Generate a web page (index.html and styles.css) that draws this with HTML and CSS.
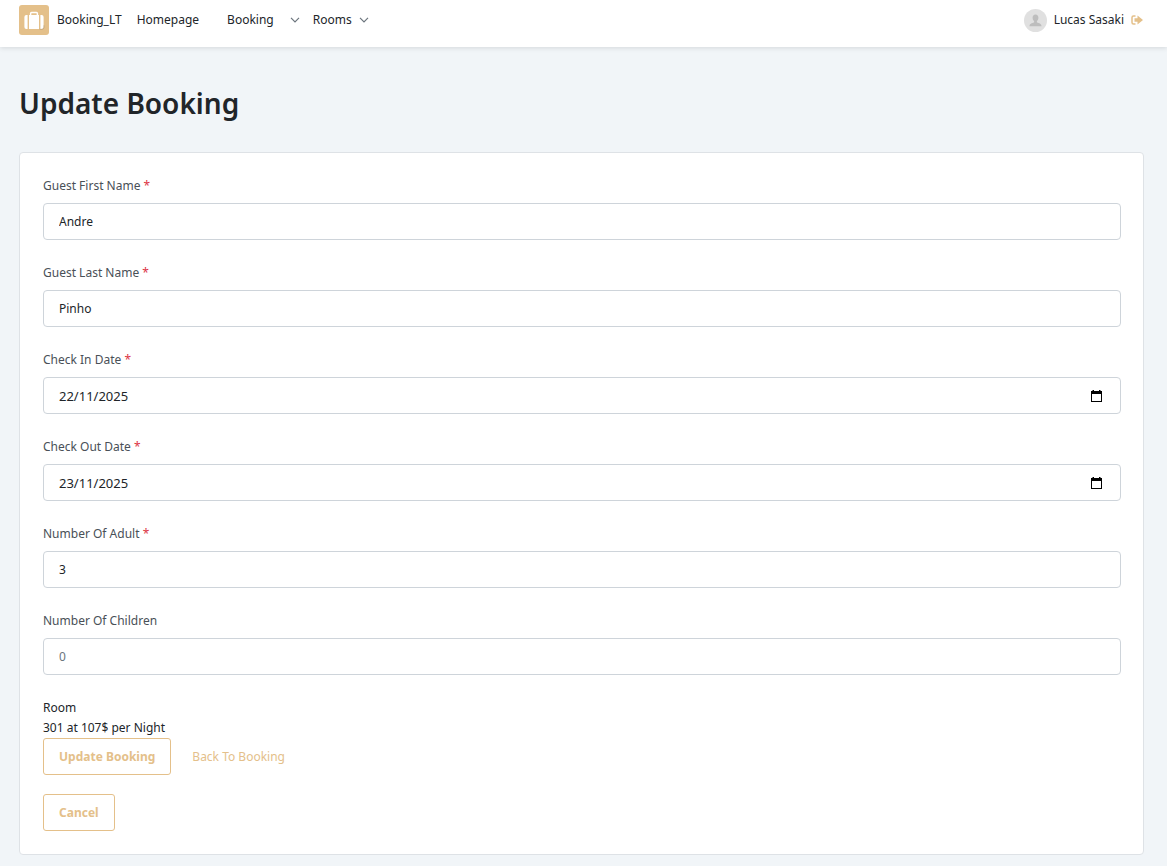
FILE: index.html
```html
<!DOCTYPE html>
<html lang="en">
<head>
<meta charset="utf-8">
<meta name="viewport" content="width=device-width, initial-scale=1">
<title>Update Booking</title>
<link rel="stylesheet" href="styles.css">
</head>
<body>
<header class="topbar">
  <a class="brand" href="#">
    <svg class="logo" viewBox="0 0 30 30" aria-hidden="true">
      <rect width="30" height="30" rx="3" fill="#e4c08a"/>
      <path d="M11.6 10V8.6q0-1 1-1h4.8q1 0 1 1V10" fill="none" stroke="#fff" stroke-width="1.5"/>
      <rect x="10" y="10" width="10" height="14" fill="#fff"/>
      <path d="M8.6 10v14H7.400q-2 0-2-2V12q0-2 2-2zM21.400 10v14h1.200q2 0 2-2V12q0-2-2-2z" fill="#fff"/>
      <path d="M20.500 24.300h2.500q2 0 2-2v-2" fill="none" stroke="#b39c78" stroke-width=".6"/>
    </svg>
    <span>Booking_LT</span>
  </a>
  <nav class="menu">
    <a class="menu-link" href="#">Homepage</a>
    <a class="menu-link menu-booking" href="#">Booking
      <svg class="chevron" viewBox="0 0 10 6" aria-hidden="true"><path d="M1 .8l4 4 4-4"/></svg></a>
    <a class="menu-link menu-rooms" href="#">Rooms
      <svg class="chevron" viewBox="0 0 10 6" aria-hidden="true"><path d="M1 .8l4 4 4-4"/></svg></a>
  </nav>
  <div class="user">
    <svg class="avatar" viewBox="0 0 23 23" aria-hidden="true">
      <circle cx="11.500" cy="11.500" r="11.500" fill="#e0e0e0"/>
      <path d="M11.500 5.500c1.900 0 2.900 1.300 2.900 3.200 0 1.500-.6 2.700-1.500 3.400v1.200c.5.500 4.600.8 4.600 3.900H5.500c0-3.100 4.100-3.400 4.600-3.900v-1.200c-.9-.7-1.500-1.900-1.500-3.400 0-1.900 1-3.200 2.900-3.200z" fill="#bdbdbd"/>
    </svg>
    <span>Lucas Sasaki</span>
    <a class="logout" href="#" aria-label="Log out">
      <svg viewBox="0 0 12 10" aria-hidden="true">
        <path d="M4.500 1H2.500Q1 1 1 2.500v5Q1 9 2.500 9h2" fill="none" stroke="#e4c08a" stroke-width="1.500"/>
        <path d="M3.500 3.200h3V.5L12 5 6.500 9.500V6.800h-3z" fill="#e4c08a"/>
      </svg>
    </a>
  </div>
</header>
<main class="page">
  <h1 class="title">Update Booking</h1>
  <form class="card">
    <div class="field">
      <label for="first">Guest First Name <span class="required">*</span></label>
      <input class="control" id="first" type="text" value="Andre">
    </div>
    <div class="field">
      <label for="last">Guest Last Name <span class="required">*</span></label>
      <input class="control" id="last" type="text" value="Pinho">
    </div>
    <div class="field">
      <label for="checkin">Check In Date <span class="required">*</span></label>
      <div class="control date">
        <input class="date-text" id="checkin" type="text" value="22/11/2025">
        <button class="picker" type="button" aria-label="Choose check in date">
          <svg viewBox="0 0 11 12" aria-hidden="true"><path d="M1.500 0h1.500v1h5V0h1.500v1H11v11H0V1h1.500z"/><path fill="#fff" d="M1 4h9v7H1z"/></svg>
        </button>
      </div>
    </div>
    <div class="field">
      <label for="checkout">Check Out Date <span class="required">*</span></label>
      <div class="control date">
        <input class="date-text" id="checkout" type="text" value="23/11/2025">
        <button class="picker" type="button" aria-label="Choose check out date">
          <svg viewBox="0 0 11 12" aria-hidden="true"><path d="M1.500 0h1.500v1h5V0h1.500v1H11v11H0V1h1.500z"/><path fill="#fff" d="M1 4h9v7H1z"/></svg>
        </button>
      </div>
    </div>
    <div class="field">
      <label for="adults">Number Of Adult <span class="required">*</span></label>
      <input class="control" id="adults" type="number" value="3">
    </div>
    <div class="field">
      <label for="children">Number Of Children</label>
      <input class="control" id="children" type="number" placeholder="0">
    </div>
    <div class="room">
      <div>Room</div>
      <div>301 at 107$ per Night</div>
    </div>
    <div class="actions">
      <button class="button" type="submit">Update Booking</button>
      <a class="back" href="#">Back To Booking</a>
    </div>
    <button class="button" type="button">Cancel</button>
  </form>
</main>
</body>
</html>
```

FILE: styles.css
```css
* {
  box-sizing: border-box;
}

body {
  margin: 0;
  min-height: 100vh;
  background: #f1f5f8;
  color: #212529;
  font-family: "Segoe UI", "Noto Sans", sans-serif;
  font-size: 12px;
  line-height: 20px;
}

a {
  color: inherit;
  text-decoration: none;
}

svg {
  display: block;
}

.topbar {
  display: flex;
  align-items: center;
  height: 47px;
  padding: 0 24px 7px 19px;
  background: #fff;
  box-shadow: 0 1px 5px rgba(0, 0, 0, 0.12);
}

.brand {
  display: flex;
  align-items: center;
  gap: 8px;
  margin-right: 15px;
}

.logo {
  width: 30px;
  height: 30px;
}

.menu {
  display: flex;
}

.menu-link {
  display: flex;
  align-items: center;
}

.menu-booking {
  gap: 16px;
  margin-left: 28px;
}

.menu-rooms {
  gap: 7px;
  margin-left: 13px;
}

.chevron {
  width: 10px;
  height: 6px;
  fill: none;
  stroke: #6c757d;
  stroke-width: 1.2;
}

.user {
  display: flex;
  align-items: center;
  gap: 7px;
  margin-left: auto;
}

.avatar {
  width: 23px;
  height: 23px;
}

.logout svg {
  width: 12px;
  height: 10px;
}

.page {
  padding: 36px 23px 11px 19px;
}

.title {
  margin: 0 0 29px;
  font-size: 28px;
  font-weight: 600;
  line-height: 40px;
}

.card {
  padding: 23px 22px 23px 23px;
  border: 1px solid #dee2e6;
  border-radius: 4px;
  background: #fff;
}

.field {
  display: flex;
  flex-direction: column;
  gap: 7px;
  margin-bottom: 23px;
  color: #495057;
}

.required {
  color: #dc3545;
}

.control {
  width: 100%;
  height: 37px;
  padding: 0 15px;
  border: 1px solid #ced4da;
  border-radius: 4px;
  background: #fff;
  color: #212529;
  font: inherit;
  appearance: textfield;
}

.control::placeholder {
  color: #6c757d;
}

.date {
  display: flex;
  align-items: center;
  padding-right: 18px;
}

.date-text {
  flex: 1;
  min-width: 0;
  padding: 0;
  border: 0;
  color: inherit;
  font: inherit;
  font-size: 13px;
}

.picker {
  padding: 0;
  border: 0;
  background: none;
}

.picker svg {
  width: 11px;
  height: 12px;
}

.actions {
  display: flex;
  align-items: center;
  gap: 21px;
  margin-bottom: 19px;
}

.button {
  height: 37px;
  padding: 0 15px;
  border: 1px solid #e4c08a;
  border-radius: 3px;
  background: #fff;
  color: #e4c08a;
  font: inherit;
  font-weight: 700;
}

.back {
  color: #e4c08a;
}
```
